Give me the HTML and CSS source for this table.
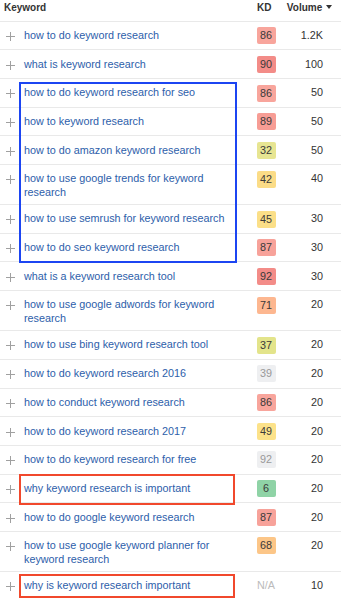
FILE: index.html
```html
<!DOCTYPE html>
<html>
<head>
<meta charset="utf-8">
<link rel="stylesheet" href="styles.css">
</head>
<body>
<div class="table">
  <div class="head">
    <div class="h-kw">Keyword</div>
    <div class="h-kd">KD</div>
    <div class="h-vol">Volume <span class="caret"></span></div>
  </div>

  <div class="row"><div class="plus"></div><a class="kw">how to do keyword research</a><div class="kd"><span class="badge c-86">86</span></div><div class="vol">1.2K</div></div>
  <div class="row"><div class="plus"></div><a class="kw">what is keyword research</a><div class="kd"><span class="badge c-90">90</span></div><div class="vol">100</div></div>

  <div class="group blue">
    <div class="row"><div class="plus"></div><a class="kw">how to do keyword research for seo</a><div class="kd"><span class="badge c-86">86</span></div><div class="vol">50</div></div>
    <div class="row"><div class="plus"></div><a class="kw">how to keyword research</a><div class="kd"><span class="badge c-89">89</span></div><div class="vol">50</div></div>
    <div class="row"><div class="plus"></div><a class="kw">how to do amazon keyword research</a><div class="kd"><span class="badge c-32">32</span></div><div class="vol">50</div></div>
    <div class="row"><div class="plus"></div><a class="kw">how to use google trends for keyword research</a><div class="kd"><span class="badge c-42">42</span></div><div class="vol">40</div></div>
    <div class="row"><div class="plus"></div><a class="kw">how to use semrush for keyword research</a><div class="kd"><span class="badge c-45">45</span></div><div class="vol">30</div></div>
    <div class="row"><div class="plus"></div><a class="kw">how to do seo keyword research</a><div class="kd"><span class="badge c-87">87</span></div><div class="vol">30</div></div>
  </div>

  <div class="row"><div class="plus"></div><a class="kw">what is a keyword research tool</a><div class="kd"><span class="badge c-90">92</span></div><div class="vol">30</div></div>
  <div class="row"><div class="plus"></div><a class="kw">how to use google adwords for keyword research</a><div class="kd"><span class="badge c-71">71</span></div><div class="vol">20</div></div>
  <div class="row"><div class="plus"></div><a class="kw">how to use bing keyword research tool</a><div class="kd"><span class="badge c-37">37</span></div><div class="vol">20</div></div>
  <div class="row"><div class="plus"></div><a class="kw">how to do keyword research 2016</a><div class="kd"><span class="badge c-gray">39</span></div><div class="vol">20</div></div>
  <div class="row"><div class="plus"></div><a class="kw">how to conduct keyword research</a><div class="kd"><span class="badge c-86">86</span></div><div class="vol">20</div></div>
  <div class="row"><div class="plus"></div><a class="kw">how to do keyword research 2017</a><div class="kd"><span class="badge c-49">49</span></div><div class="vol">20</div></div>
  <div class="row"><div class="plus"></div><a class="kw">how to do keyword research for free</a><div class="kd"><span class="badge c-gray">92</span></div><div class="vol">20</div></div>

  <div class="group red">
    <div class="row"><div class="plus"></div><a class="kw">why keyword research is important</a><div class="kd"><span class="badge c-6">6</span></div><div class="vol">20</div></div>
  </div>

  <div class="row"><div class="plus"></div><a class="kw">how to do google keyword research</a><div class="kd"><span class="badge c-87">87</span></div><div class="vol">20</div></div>
  <div class="row"><div class="plus"></div><a class="kw">how to use google keyword planner for keyword research</a><div class="kd"><span class="badge c-68">68</span></div><div class="vol">20</div></div>

  <div class="group red last">
    <div class="row"><div class="plus"></div><a class="kw">why is keyword research important</a><div class="kd"><span class="badge na">N/A</span></div><div class="vol">10</div></div>
  </div>
</div>
</body>
</html>
```

FILE: styles.css
```css
* { box-sizing: border-box; }
html, body { margin: 0; padding: 0; background: #fff; }
body {
  font-family: "Liberation Sans", Arial, sans-serif;
  font-size: 10.8px;
  color: #333;
  width: 341px;
  overflow: hidden;
}
.table { width: 341px; }

.head {
  display: grid;
  grid-template-columns: 247px 38px 1fr;
  height: 21.7px;
  border-bottom: 1px solid #e9e9e9;
  font-weight: bold;
  font-size: 10px;
  color: #333;
  padding-top: 2px;
  line-height: 12px;
}
.h-kw { padding-left: 4px; }
.h-kd { padding-left: 10px; }
.h-vol { text-align: right; padding-right: 9px; white-space: nowrap; }
.caret {
  display: inline-block;
  width: 0; height: 0;
  border-left: 3px solid transparent;
  border-right: 3px solid transparent;
  border-top: 4px solid #333;
  vertical-align: 2px;
  margin-left: 1px;
}

.row {
  display: grid;
  grid-template-columns: 24px 223px 38px 1fr;
  align-items: start;
  border-bottom: 1px solid #e9e9e9;
}
.plus {
  position: relative;
  height: 9px;
  width: 9px;
  margin: 10.3px 0 0 6px;
}
.plus::before, .plus::after {
  content: "";
  position: absolute;
  background: #a0a0a0;
}
.plus::before { left: 0; right: 0; top: 4px; height: 1px; }
.plus::after { top: 0; bottom: 0; left: 4px; width: 1px; }

.kw {
  color: #2d5eaa;
  text-decoration: none;
  line-height: 13.5px;
  padding: 7.3px 8px 4.7px 0;
}
.kd {
  padding: 5.5px 0 5.2px;
  display: flex;
  justify-content: center;
}
.badge {
  display: block;
  min-width: 19px;
  height: 17px;
  line-height: 17px;
  padding: 0 3px;
  text-align: center;
  border-radius: 2px;
  color: #3a3a3a;
}
.vol {
  text-align: right;
  padding: 7.3px 18px 0 0;
  line-height: 13.5px;
  color: #333;
}

.c-86 { background: #f8a59c; }
.c-87 { background: #f7a29a; }
.c-89 { background: #f79d95; }
.c-90 { background: #f38c88; }
.c-32 { background: #e7e592; }
.c-37 { background: #e3e48b; }
.c-42 { background: #fbdc87; }
.c-45 { background: #fbdf88; }
.c-49 { background: #fce28a; }
.c-71 { background: #fdb790; }
.c-68 { background: #fcc688; }
.c-6 { background: #8fd3a6; }
.c-gray { background: #eeeff1; color: #999; }
.na { background: none; color: #bbb; }

.group { position: relative; }
.group::after {
  content: "";
  position: absolute;
  pointer-events: none;
  left: 19.3px;
  width: 214px;
  border: 2px solid;
}
.group.blue::after {
  border-color: #1c45f2;
  top: 3.2px;
  bottom: -0.6px;
}
.group.red::after {
  border-color: #f1482c;
  left: 18.7px;
  width: 212.5px;
  top: -0.5px;
  bottom: -1.7px;
}
.group.red.last::after {
  top: 1.8px;
  bottom: 2.2px;
}
```
